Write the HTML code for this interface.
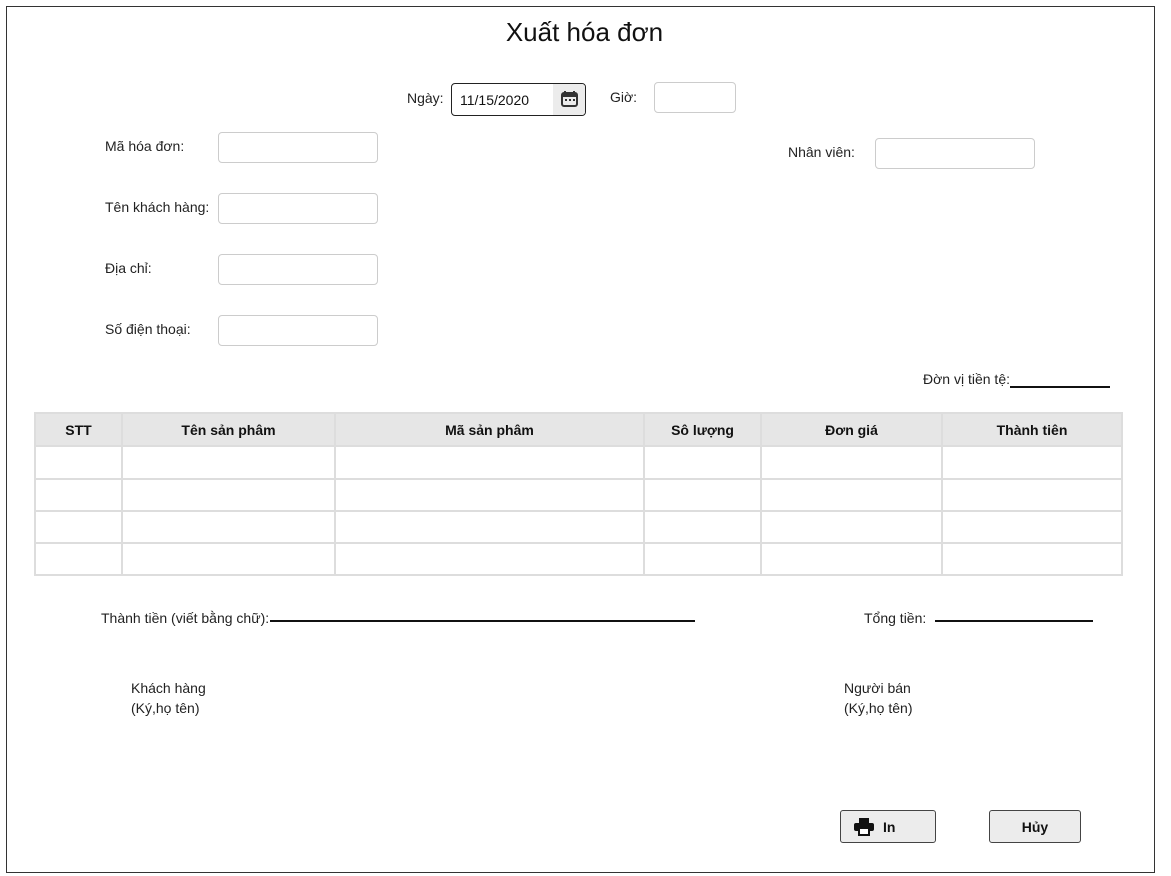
<!DOCTYPE html>
<html><head><meta charset="utf-8"><style>
*{box-sizing:border-box;margin:0;padding:0}
body{width:1171px;height:876px;background:#fff;font-family:"Liberation Sans",Arial,sans-serif;font-size:14px;color:#222;position:relative;overflow:hidden}
.a{position:absolute;white-space:nowrap}
.frame{position:absolute;left:6px;top:6px;width:1149px;height:867px;border:1px solid #333}
.inp{position:absolute;border:1px solid #ccc;border-radius:4px;height:31px;width:160px;background:#fff}
.line{position:absolute;border-top:2px solid #111}
table{position:absolute;left:34px;top:412px;width:1089px;border-collapse:collapse}
td,th{border:2px solid #ddd;height:31px;padding:0}
th{background:#e6e6e6;font-weight:bold;font-size:14px;color:#111;height:33px}
.btn{position:absolute;border:1px solid #444;border-radius:3px;background:#ececec;height:33px;font-weight:bold;font-size:14px;color:#111;display:flex;align-items:center;justify-content:center}
</style></head><body>
<div class="frame"></div>
<div class="a" style="left:0;width:1169px;text-align:center;top:17px;font-size:26px;color:#111">Xuất hóa đơn</div>

<div class="a" style="left:407px;top:90px">Ngày:</div>
<div class="a" style="left:451px;top:83px;width:135px;height:33px;border:1px solid #222;border-radius:4px;overflow:hidden">
<div class="a" style="left:8px;top:8px;color:#111">11/15/2020</div>
<div class="a" style="left:101px;top:0;width:33px;height:31px;background:#ececec">
<svg width="33" height="31" viewBox="0 0 33 31"><rect x="9" y="9" width="15" height="13" rx="2" fill="none" stroke="#333" stroke-width="2"/><rect x="9" y="9" width="15" height="4" fill="#333"/><rect x="11" y="7" width="2" height="4" fill="#333"/><rect x="20" y="7" width="2" height="4" fill="#333"/><rect x="12" y="15" width="2" height="2" fill="#333"/><rect x="16" y="15" width="2" height="2" fill="#333"/><rect x="20" y="15" width="2" height="2" fill="#333"/></svg></div>
</div>
<div class="a" style="left:610px;top:89px">Giờ:</div>
<div class="inp" style="left:654px;top:82px;width:82px"></div>

<div class="a" style="left:105px;top:138px">Mã hóa đơn:</div>
<div class="inp" style="left:218px;top:132px"></div>
<div class="a" style="left:105px;top:199px">Tên khách hàng:</div>
<div class="inp" style="left:218px;top:193px"></div>
<div class="a" style="left:105px;top:260px">Địa chỉ:</div>
<div class="inp" style="left:218px;top:254px"></div>
<div class="a" style="left:105px;top:321px">Số điện thoại:</div>
<div class="inp" style="left:218px;top:315px"></div>

<div class="a" style="left:788px;top:144px">Nhân viên:</div>
<div class="inp" style="left:875px;top:138px"></div>

<div class="a" style="left:923px;top:371px">Đờn vị tiền tệ:</div>
<div class="line" style="left:1010px;top:386px;width:100px"></div>

<table>
<tr><th style="width:87px">STT</th><th style="width:213px">Tên sản phâm</th><th style="width:309px">Mã sản phâm</th><th style="width:117px">Sô lượng</th><th style="width:181px">Đơn giá</th><th>Thành tiên</th></tr>
<tr><td style="height:33px"></td><td></td><td></td><td></td><td></td><td></td></tr>
<tr><td style="height:32px"></td><td></td><td></td><td></td><td></td><td></td></tr>
<tr><td style="height:32px"></td><td></td><td></td><td></td><td></td><td></td></tr>
<tr><td style="height:32px"></td><td></td><td></td><td></td><td></td><td></td></tr>
</table>

<div class="a" style="left:101px;top:610px">Thành tiền (viết bằng chữ):</div>
<div class="line" style="left:270px;top:620px;width:425px"></div>
<div class="a" style="left:864px;top:610px">Tổng tiền:</div>
<div class="line" style="left:935px;top:620px;width:158px"></div>

<div class="a" style="left:131px;top:678px;line-height:20px">Khách hàng<br>(Ký,họ tên)</div>
<div class="a" style="left:844px;top:678px;line-height:20px">Người bán<br>(Ký,họ tên)</div>

<div class="btn" style="left:840px;top:810px;width:96px;justify-content:flex-start;padding-left:13px">
<svg width="20" height="18" viewBox="0 0 20 18" style="margin-right:9px"><rect x="5" y="0" width="10" height="5" fill="#111"/><rect x="0" y="5" width="20" height="8" rx="2" fill="#111"/><rect x="4" y="10" width="12" height="8" fill="#111"/><rect x="6" y="11" width="8" height="5" fill="#fff"/></svg>In</div>
<div class="btn" style="left:989px;top:810px;width:92px">Hủy</div>
</body></html>
